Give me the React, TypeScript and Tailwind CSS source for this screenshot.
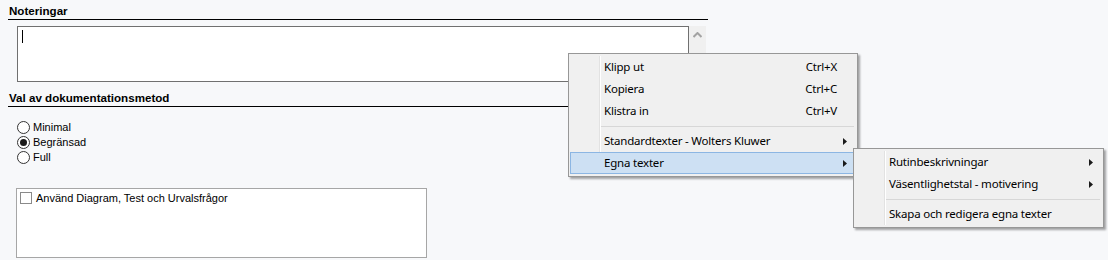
import React from "react";

function Radio({ label, checked }: { label: string; checked?: boolean }) {
  return (
    <div className="flex items-center h-[15px]">
      <div className="w-[13px] h-[13px] rounded-full border border-[#333333] bg-white flex items-center justify-center">
        {checked && <div className="w-[7px] h-[7px] rounded-full bg-[#1a1a1a]" />}
      </div>
      <span className="ml-[3px] text-[11px] leading-[15px] text-black">{label}</span>
    </div>
  );
}

function Arrow() {
  return (
    <svg width="4" height="7" viewBox="0 0 4 7" className="block">
      <path d="M0 0 L4 3.5 L0 7 Z" fill="#1a1a1a" />
    </svg>
  );
}

function MenuItem({
  label,
  shortcut,
  sub,
  active,
}: {
  label: string;
  shortcut?: string;
  sub?: boolean;
  active?: boolean;
}) {
  return (
    <div
      className={
        "relative h-[22px] flex items-center mx-[1px] " +
        (active ? "bg-[#cde0f3] border border-[#8cb6e3]" : "border border-transparent")
      }
    >
      <span className="ml-[33px] flex-1 text-[11.5px] tracking-[-0.2px] text-black whitespace-nowrap">{label}</span>
      {shortcut && <span className="text-[11.5px] tracking-[-0.2px] text-black mr-[18px]">{shortcut}</span>}
      {sub && (
        <span className="mr-[8px]">
          <Arrow />
        </span>
      )}
    </div>
  );
}

function Sep() {
  return (
    <div className="h-[8px] flex items-center ml-[32px] mr-[3px]">
      <div className="h-px w-full bg-[#d7d7d7]" />
    </div>
  );
}

export default function App() {
  return (
    <div className="relative w-[1108px] h-[260px] bg-[#f7f8fa] overflow-hidden font-['Liberation_Sans',Arial,sans-serif] text-black">
      <div className="ml-[8px] w-[700px]">
        <div className="pt-[3px] h-[20px] border-b border-black">
          <div className="ml-[1px] text-[11.6px] font-bold leading-[15px]">Noteringar</div>
        </div>
        <div className="mt-[6px] ml-[9px] flex">
          <div className="w-[672px] h-[56px] border border-[#707070] bg-white relative">
            <div className="absolute left-[4px] top-[3px] w-px h-[13px] bg-black" />
          </div>
          <div className="w-[17px] h-[56px] bg-[#f0f0f0] flex justify-center pt-[6px]">
            <svg width="9" height="6" viewBox="0 0 9 6" className="block">
              <path d="M0.5 5 L4.5 1 L8.5 5" stroke="#a3a3a3" strokeWidth="2" fill="none" />
            </svg>
          </div>
        </div>
        <div className="mt-[7px] h-[18px] border-b border-black">
          <div className="ml-[1px] pt-[1px] text-[11.6px] font-bold leading-[15px]">Val av dokumentationsmetod</div>
        </div>
        <div className="mt-[13px] ml-[9px] flex flex-col">
          <Radio label="Minimal" />
          <Radio label="Begränsad" checked />
          <Radio label="Full" />
        </div>
        <div className="mt-[23px] ml-[8px] w-[411px] h-[70px] border border-[#a6a6a6] bg-white">
          <div className="flex items-center mt-[2px] ml-[3px]">
            <div className="w-[12px] h-[12px] border border-[#8a8a8a] bg-white" />
            <span className="ml-[4px] text-[11px] leading-[14px]">Använd Diagram, Test och Urvalsfrågor</span>
          </div>
        </div>
      </div>

      {/* Context menu */}
      <div className="absolute left-[568px] top-[53px] w-[290px] bg-[#f0f0f0] border border-[#979797] shadow-[2px_2px_2px_rgba(0,0,0,0.35)] py-[2px] font-['Noto_Sans',sans-serif]">
        <div className="absolute left-[30px] top-[2px] bottom-[2px] w-px bg-[#e2e2e2]" />
        <div className="absolute left-[31px] top-[2px] bottom-[2px] w-px bg-white" />
        <MenuItem label="Klipp ut" shortcut="Ctrl+X" />
        <MenuItem label="Kopiera" shortcut="Ctrl+C" />
        <MenuItem label="Klistra in" shortcut="Ctrl+V" />
        <Sep />
        <MenuItem label="Standardtexter - Wolters Kluwer" sub />
        <MenuItem label="Egna texter" sub active />
      </div>

      {/* Submenu */}
      <div className="absolute left-[853px] top-[148px] w-[251px] bg-[#f0f0f0] border border-[#979797] shadow-[2px_2px_2px_rgba(0,0,0,0.35)] py-[2px] font-['Noto_Sans',sans-serif]">
        <div className="absolute left-[30px] top-[2px] bottom-[2px] w-px bg-[#e2e2e2]" />
        <div className="absolute left-[31px] top-[2px] bottom-[2px] w-px bg-white" />
        <MenuItem label="Rutinbeskrivningar" sub />
        <MenuItem label="Väsentlighetstal - motivering" sub />
        <Sep />
        <MenuItem label="Skapa och redigera egna texter" />
      </div>
    </div>
  );
}
